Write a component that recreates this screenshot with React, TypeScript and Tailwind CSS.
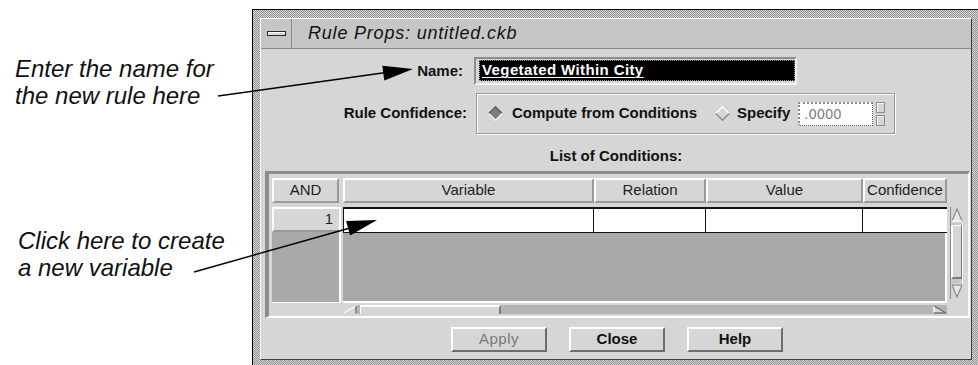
import React from 'react';

const FONT = "font-['Liberation_Sans',Arial,Helvetica,sans-serif]";

function Diamond({ on }: { on: boolean }) {
  return (
    <svg width="15" height="15" viewBox="0 0 15 15" className="shrink-0">
      <polygon points="7.5,0.8 14.2,7.5 7.5,14.2 0.8,7.5" fill={on ? '#7d7d7d' : '#d6d6d6'} />
      <polyline points="0.8,7.5 7.5,0.8 14.2,7.5" fill="none" stroke={on ? '#5c5c5c' : '#ffffff'} strokeWidth="1.4" />
      <polyline points="0.8,7.5 7.5,14.2 14.2,7.5" fill="none" stroke={on ? '#f4f4f4' : '#8c8c8c'} strokeWidth="1.4" />
    </svg>
  );
}

function HeadCell({ w, children }: { w: string; children: React.ReactNode }) {
  return (
    <div
      className={`${w} h-[25px] flex items-center justify-center border-t-2 border-l-2 border-white border-b-2 border-r-2 border-b-[#9a9a9a] border-r-[#9a9a9a] text-[15px] text-[#1e1e1e] overflow-hidden whitespace-nowrap`}
    >
      {children}
    </div>
  );
}

function Button({ label, disabled }: { label: string; disabled?: boolean }) {
  return (
    <div
      className={`w-[96px] h-[25px] flex items-center justify-center border-t-2 border-l-2 border-white border-b-2 border-r-2 border-b-[#6e6e6e] border-r-[#6e6e6e] text-[15px] ${
        disabled ? 'text-[#7a7a7a] font-normal tracking-[0.5px]' : 'text-[#111] font-bold'
      }`}
    >
      {label}
    </div>
  );
}

function ConditionsTable() {
  return (
    <div className="ml-[4px] w-[705px] h-[147px] border-t-[3px] border-l-[4px] border-[#8c8c8c] border-b-2 border-r-2 border-b-white border-r-white pl-[3px] pt-[4px]">
      {/* header */}
      <div className="flex">
        <HeadCell w="w-[67px]">AND</HeadCell>
        <div className="ml-[4px] flex">
          <HeadCell w="w-[251px]">Variable</HeadCell>
          <HeadCell w="w-[112px]">Relation</HeadCell>
          <HeadCell w="w-[157px]">Value</HeadCell>
          <HeadCell w="w-[84px]">Confidence</HeadCell>
        </div>
      </div>

      {/* rows */}
      <div className="flex mt-[4px]">
        <div className="w-[69px] h-[96px] bg-[#a9a9a9] border-r-2 border-b border-white flex flex-col">
          <div className="h-[25px] flex items-center justify-end pr-[6px] bg-[#d6d6d6] border-t-2 border-l-2 border-white border-b-2 border-b-[#9a9a9a] text-[15px] text-[#1e1e1e]">
            1
          </div>
        </div>

        <div className="ml-[2px] w-[604px] flex flex-col">
          <div className="flex h-[26px] bg-white border-t-2 border-b border-l border-[#111]">
            <div className="w-[250px] border-r border-[#111]" />
            <div className="w-[112px] border-r border-[#111]" />
            <div className="w-[157px] border-r border-[#111]" />
            <div className="flex-1" />
          </div>
          <div className="h-[70px] bg-[#a9a9a9] border-b-2 border-r-2 border-white" />
          {/* horizontal scrollbar */}
          <div className="mt-[2px] h-[9px] flex bg-[#b4b4b4]">
            <svg width="14" height="9" viewBox="0 0 14 9" className="shrink-0 bg-[#d6d6d6]">
              <polygon points="1,8 13,1 13,8" fill="#d6d6d6" />
              <line x1="1" y1="8" x2="13" y2="1" stroke="#ffffff" strokeWidth="1.4" />
              <line x1="13" y1="1" x2="13" y2="8.5" stroke="#6e6e6e" strokeWidth="1.4" />
            </svg>
            <div className="ml-[3px] w-[141px] h-full bg-[#d6d6d6] border-t-2 border-l border-white border-r-2 border-r-[#7a7a7a]" />
            <div className="flex-1" />
            <svg width="14" height="9" viewBox="0 0 14 9" className="shrink-0">
              <polygon points="1,1 13,8 1,8" fill="#d6d6d6" />
              <line x1="1" y1="1" x2="1" y2="8" stroke="#ffffff" strokeWidth="1.4" />
              <line x1="1" y1="1" x2="13" y2="8" stroke="#6e6e6e" strokeWidth="1.4" />
              <line x1="1" y1="8" x2="13" y2="8" stroke="#6e6e6e" strokeWidth="1.4" />
            </svg>
          </div>
        </div>

        {/* vertical scrollbar */}
        <div className="ml-[3px] w-[13px] h-[92px] flex flex-col bg-[#c6c6c6] border-l border-[#8a8a8a] border-r border-r-white">
          <svg width="12" height="16" viewBox="0 0 12 16" className="shrink-0 bg-[#d6d6d6]">
            <polygon points="6,2 11,14 1,14" fill="#e8e8e8" />
            <polyline points="1,14 6,2 11,14" fill="none" stroke="#8a8a8a" strokeWidth="1.2" />
            <line x1="1" y1="14" x2="11" y2="14" stroke="#ffffff" strokeWidth="1.2" />
          </svg>
          <div className="mt-[2px] h-[54px] bg-[#d6d6d6] border-t border-l-2 border-white border-b-2 border-r border-b-[#7a7a7a] border-r-[#7a7a7a]" />
          <div className="flex-1" />
          <svg width="12" height="16" viewBox="0 0 12 16" className="shrink-0 bg-[#d6d6d6]">
            <polygon points="1,2 11,2 6,14" fill="#e8e8e8" />
            <line x1="1" y1="2" x2="11" y2="2" stroke="#8a8a8a" strokeWidth="1.2" />
            <polyline points="1,2 6,14 11,2" fill="none" stroke="#8a8a8a" strokeWidth="1.2" />
          </svg>
        </div>
      </div>
    </div>
  );
}

function RuleProps() {
  return (
    <div className="mt-[9px] w-[728px] h-[380px] shrink-0 border border-black pl-[7px] pt-[8px] bg-[image:repeating-conic-gradient(#8e8e8e_0%_25%,#dadada_0%_50%)] bg-[length:2px_2px]">
      <div className="w-[712px] flex flex-col border-t border-l border-white border-r border-b border-r-[#3c3c3c] border-b-[#3c3c3c] bg-[#d6d6d6]">
        {/* title bar */}
        <div className="h-[30px] flex items-stretch bg-[#c6c6c6] border-b border-[#8a8a8a]">
          <div className="w-[31px] flex items-center justify-center border-r border-[#8a8a8a]">
            <div className="w-[19px] h-[5px] bg-[#d6d6d6] border border-[#2a2a2a] shadow-[inset_1px_1px_0_#ffffff]" />
          </div>
          <div className="pl-[16px] flex items-center italic text-[18px] tracking-[0.8px] text-[#111]">
            Rule Props: untitled.ckb
          </div>
        </div>

        {/* body */}
        <div className="h-[310px] flex flex-col pt-[8px] pb-[7px]">
          <div className="flex items-center h-[28px]">
            <div className="w-[202px] text-right font-bold text-[15px] text-[#111]">Name:</div>
            <div className="ml-[11px] w-[323px] h-[28px] border-t-2 border-l-2 border-[#8c8c8c] border-b-2 border-r-2 border-b-[#f2f2f2] border-r-[#f2f2f2] pl-[3px] pt-[1px] pb-[2px]">
              <div className="h-full bg-black border border-dotted border-[#9a9a9a] flex items-center pl-[2px] text-white font-bold text-[15px] tracking-[0.4px] underline underline-offset-[2px] decoration-1">
                Vegetated Within City
              </div>
            </div>
          </div>

          <div className="flex items-center mt-[8px] h-[41px]">
            <div className="w-[206px] text-right font-bold text-[15px] text-[#111]">Rule Confidence:</div>
            <div className="ml-[9px] w-[419px] h-[41px] border border-[#9a9a9a] shadow-[inset_1px_1px_0_#ffffff,1px_1px_0_#ffffff] flex items-center pl-[11px]">
              <Diamond on />
              <span className="ml-[9px] font-bold text-[15px] text-[#111] whitespace-nowrap">Compute from Conditions</span>
              <div className="ml-[18px]">
                <Diamond on={false} />
              </div>
              <span className="ml-[7px] font-bold text-[15px] text-[#111]">Specify</span>
              <div className="ml-[8px] w-[75px] h-[24px] bg-white border-t-2 border-l-2 border-[#8c8c8c] border-b border-r border-dotted border-b-[#555] border-r-[#555] flex items-center pl-[4px] text-[14px] text-[#7a7a7a] tracking-[0.5px]">
                .0000
              </div>
              <div className="ml-[3px] w-[9px] h-[24px] flex flex-col gap-[2px]">
                <div className="flex-1 bg-[#d6d6d6] border border-[#8c8c8c] shadow-[inset_1px_1px_0_#ffffff]" />
                <div className="flex-1 bg-[#d6d6d6] border border-[#8c8c8c] shadow-[inset_1px_1px_0_#ffffff]" />
              </div>
            </div>
          </div>

          <div className="h-[37px] pt-[8px] flex items-center justify-center font-bold text-[15px] text-[#111]">
            List of Conditions:
          </div>

          <ConditionsTable />

          <div className="mt-[9px] flex justify-center gap-[22px] pl-[2px]">
            <Button label="Apply" disabled />
            <Button label="Close" />
            <Button label="Help" />
          </div>
        </div>
      </div>
    </div>
  );
}

export default function App() {
  return (
    <div className={`relative w-[978px] h-[365px] overflow-hidden bg-white flex ${FONT}`}>
      <div className="w-[252px] shrink-0 pt-[55px] pl-[15px] italic text-[24px] leading-[27px] text-[#111]">
        <div>
          Enter the name for
          <br />
          the new rule here
        </div>
        <div className="mt-[118px] pl-[3px]">
          Click here to create
          <br />
          a new variable
        </div>
      </div>

      <RuleProps />

      <svg className="absolute left-0 top-0 pointer-events-none" width="978" height="365" viewBox="0 0 978 365">
        <line x1="218" y1="96" x2="386" y2="72.5" stroke="#000" strokeWidth="1.5" />
        <polygon points="413,69 384.3,80.5 382.3,65.7" fill="#000" />
        <line x1="194" y1="272" x2="350" y2="228" stroke="#000" strokeWidth="1.5" />
        <polygon points="377,220 350.1,235.4 346.1,221" fill="#000" />
      </svg>
    </div>
  );
}
